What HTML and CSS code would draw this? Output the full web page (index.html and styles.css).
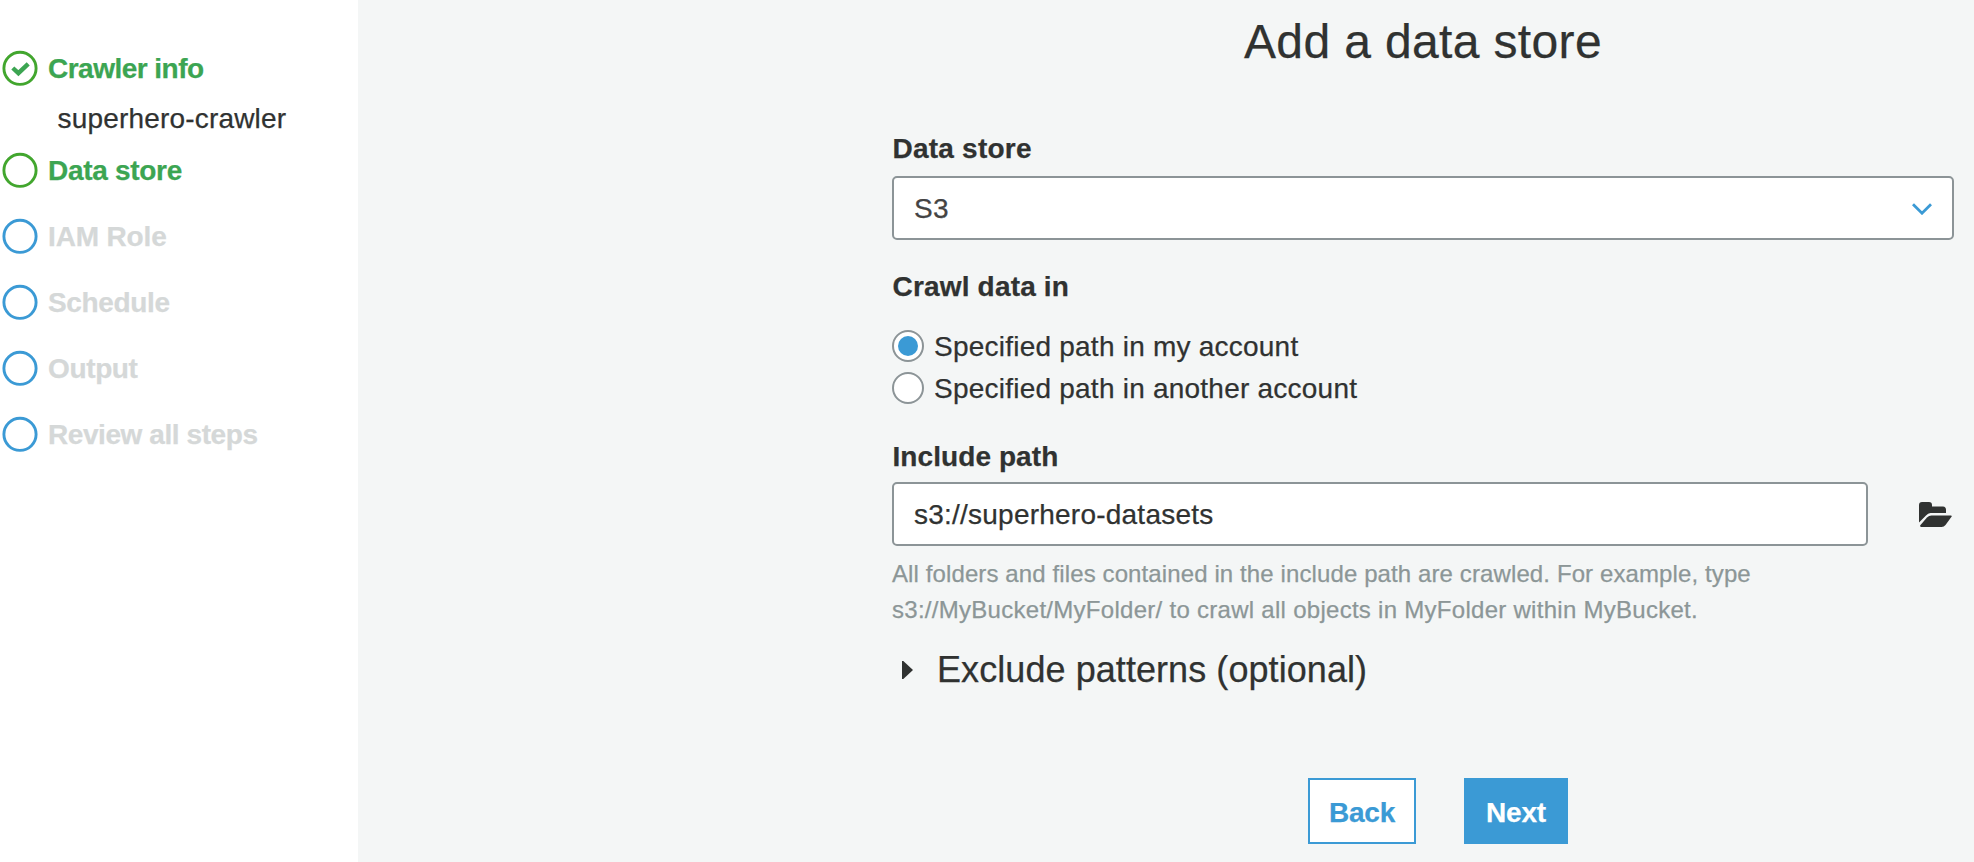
FILE: index.html
```
<!DOCTYPE html>
<html lang="en">
<head>
<meta charset="utf-8">
<title>Add a data store</title>
<link rel="stylesheet" href="styles.css">
</head>
<body>
<nav class="steps">
  <div class="step done"><svg class="ring" viewBox="0 0 36 36"><circle cx="18" cy="18.300" r="16.1"/><path class="tick" d="M10.800 18l5.600 5.200 9.800-9.400"/></svg><span class="t-crawler">Crawler info</span></div>
  <div class="detail">superhero-crawler</div>
  <div class="step current"><svg class="ring" viewBox="0 0 36 36"><circle cx="18" cy="18.300" r="16.1"/></svg><span>Data store</span></div>
  <div class="step"><svg class="ring" viewBox="0 0 36 36"><circle cx="18" cy="18.300" r="16.1"/></svg><span class="t-iam">IAM Role</span></div>
  <div class="step"><svg class="ring" viewBox="0 0 36 36"><circle cx="18" cy="18.300" r="16.1"/></svg><span>Schedule</span></div>
  <div class="step"><svg class="ring" viewBox="0 0 36 36"><circle cx="18" cy="18.300" r="16.1"/></svg><span>Output</span></div>
  <div class="step"><svg class="ring" viewBox="0 0 36 36"><circle cx="18" cy="18.300" r="16.1"/></svg><span class="t-review">Review all steps</span></div>
</nav>
<main class="panel">
  <h1 class="title">Add a data store</h1>
  <div class="label">Data store</div>
  <div class="control select"><span>S3</span><svg class="chevron" viewBox="0 0 20 12"><path d="M1 1.300l9 8.900 9-8.900"/></svg></div>
  <div class="label crawl">Crawl data in</div>
  <div class="options">
    <div class="option"><i class="radio on"></i><span>Specified path in my account</span></div>
    <div class="option"><i class="radio"></i><span>Specified path in another account</span></div>
  </div>
  <div class="label include">Include path</div>
  <div class="row">
    <div class="control path">s3://superhero-datasets</div>
    <svg class="folder" viewBox="0 0 33 25"><path d="M0 20.500V3Q0 0 3 0H10Q13 0 13 3V4.500H24Q27 4.500 27 8V11H11.500Q9 11 7 13.500Z"/><path d="M1.500 23L8 15.500Q10 13.500 12.500 13.500H32Q33.300 13.500 32.500 14.700L26.500 23Q25 25 22.500 25H2Q.500 24.500 1.500 23Z"/></svg>
  </div>
  <div class="help"><div>All folders and files contained in the include path are crawled. For example, type</div><div class="example">s3://MyBucket/MyFolder/ to crawl all objects in MyFolder within MyBucket.</div></div>
  <div class="exclude"><i class="arrow"></i><span>Exclude patterns (optional)</span></div>
  <div class="actions"><div class="button back">Back</div><div class="button next">Next</div></div>
</main>
</body>
</html>
```
FILE: styles.css
```
* { box-sizing: border-box; }

body {
  margin: 0;
  display: flex;
  height: 862px;
  overflow: hidden;
  font: 28px/38px "Liberation Sans", Arial, sans-serif;
  letter-spacing: 0.23px;
  white-space: nowrap;
  background: #f4f6f6;
  color: #303231;
  -webkit-text-stroke: 0.25px currentColor;
}

.steps { width: 358px; flex: none; background: #fff; padding-top: 50px; }
.step {
  display: flex;
  gap: 10px;
  height: 36px;
  margin-bottom: 30px;
  padding-left: 2px;
  font-weight: bold;
  letter-spacing: -0.36px;
  color: #d5d8d8;
}
.step.done { margin-bottom: 14px; }
.step.done, .step.current { color: #3ca552; }
.step.current { letter-spacing: -0.3px; }
.detail { height: 36px; margin-bottom: 16px; padding-left: 57.500px; letter-spacing: 0.18px; }
.ring { width: 36px; height: 36px; fill: none; stroke: #3b9ad5; stroke-width: 2.9; }
.done .ring, .current .ring { stroke: #42a62e; }
.ring .tick { stroke: #3ca552; stroke-width: 4.4; }
.step .t-crawler { letter-spacing: -0.52px; }
.step .t-iam { letter-spacing: -0.14px; }
.step .t-review { letter-spacing: -0.42px; }

.panel { width: 1062px; margin-left: 534px; padding-top: 12px; flex: none; }
.title {
  margin: 0 0 58px;
  font-size: 48px;
  line-height: 60px;
  font-weight: normal;
  letter-spacing: 0.36px;
  text-align: center;
}
.label { height: 36px; margin-bottom: 10px; padding-left: 0.500px; font-weight: bold; }
.label.crawl { margin: 28px 0 24px; letter-spacing: 0.18px; }
.label.include { margin: 32px 0 8px; letter-spacing: 0.08px; }
.control {
  display: flex;
  align-items: center;
  height: 64px;
  padding: 1px 20px 0 20px;
  border: 2px solid #8c9497;
  border-radius: 5px;
  background: #fff;
}
.select { justify-content: space-between; color: #444; }
.chevron { width: 20px; height: 12px; margin-top: 1px; fill: none; stroke: #3b9ad5; stroke-width: 2.8; }

.options { display: grid; gap: 6px; }
.option { display: flex; align-items: center; gap: 10px; height: 36px; }
.option span { padding-top: 1px; }
.radio {
  display: grid;
  place-items: center;
  width: 32px;
  height: 32px;
  border: 2px solid #8c9497;
  border-radius: 50%;
  background: #fff;
}
.radio.on::after { content: ""; width: 20px; height: 20px; border-radius: 50%; background: #3b9ad5; }

.row { display: flex; align-items: center; justify-content: space-between; padding-right: 2px; }
.path { width: 976px; }
.folder { width: 33px; height: 25px; margin-top: 1px; fill: #303231; }

.help { margin-top: 10px; font-size: 24px; line-height: 36px; letter-spacing: 0.11px; color: #8c9697; }
.example { letter-spacing: 0.28px; }

.exclude {
  display: flex;
  align-items: center;
  gap: 24px;
  margin-top: 18px;
  padding-left: 10px;
  font-size: 36px;
  line-height: 48px;
  letter-spacing: 0.07px;
}
.arrow { width: 11px; height: 18px; background: #303231; clip-path: polygon(0 0, 12% 0, 100% 50%, 12% 100%, 0 100%); }

.actions { display: flex; gap: 48px; margin: 84px 0 0 416px; }
.button {
  width: 108px;
  height: 66px;
  padding-top: 14px;
  border: 2px solid #3b9ad5;
  font-weight: bold;
  letter-spacing: -0.2px;
  text-align: center;
  color: #3b9ad5;
  background: #fff;
}
.next { width: 104px; color: #fff; background: #3b9ad5; }
```
